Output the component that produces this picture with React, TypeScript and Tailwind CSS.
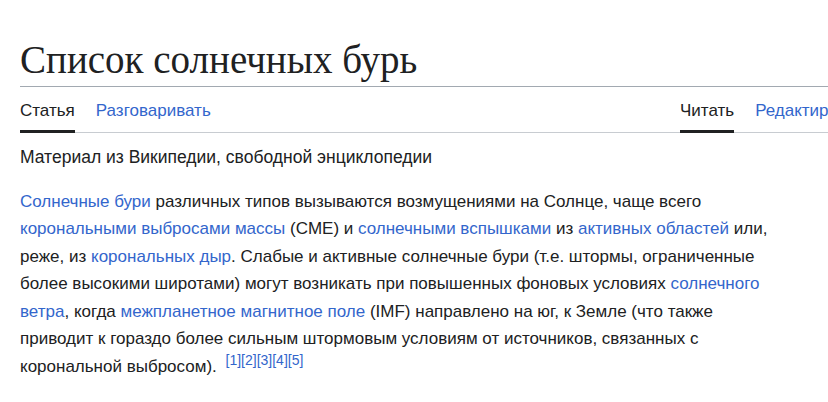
export default function App() {
  const link = 'text-[#3366cc]';
  return (
    <div className="min-h-screen bg-white text-[#202122] font-['Liberation_Sans',Arial,sans-serif] overflow-hidden">
      <div className="pl-5 pt-[37px]">
        <h1 className="font-['Liberation_Serif','Times_New_Roman',serif] text-[39px] leading-[1.2] pb-[2px] border-b border-[#a2a9b1] whitespace-nowrap">
          Список солнечных бурь
        </h1>
        <div className="flex whitespace-nowrap border-b border-[#c8ccd1] text-[17px] leading-5">
          <div className="flex gap-[21px] w-[660px] flex-none">
            <span className="pt-[14px] pb-[9px] border-b-[3px] border-[#202122] -mb-px">Статья</span>
            <span className={`pt-[14px] pb-[9px] ${link}`}>Разговаривать</span>
          </div>
          <div className="flex gap-[21px] flex-none">
            <span className="pt-[14px] pb-[9px] border-b-[3px] border-[#202122] -mb-px">Читать</span>
            <span className={`pt-[14px] pb-[9px] ${link}`}>Редактировать</span>
          </div>
        </div>
      </div>
      <div className="px-5 w-[808px]">
        <p className="text-[17.5px] leading-[26px] mt-[11px]">Материал из Википедии, свободной энциклопедии</p>
        <p className="text-[17px] leading-[27.5px] mt-[18px]">
          <a className={link}>Солнечные бури</a> различных типов вызываются возмущениями на Солнце, чаще всего{' '}
          <a className={link}>корональными выбросами массы</a> (CME) и <a className={link}>солнечными вспышками</a> из{' '}
          <a className={link}>активных областей</a> или, реже, из <a className={link}>корональных дыр</a>. Слабые и активные
          солнечные бури (т.е. штормы, ограниченные более высокими широтами) могут возникать при повышенных фоновых условиях{' '}
          <a className={link}>солнечного ветра</a>, когда <a className={link}>межпланетное магнитное поле</a> (IMF)
          направлено на юг, к Земле (что также приводит к гораздо более сильным штормовым условиям от источников,
          связанных с корональной выбросом).{' '}
          <sup className={`${link} text-[14px] ml-[4px]`}>[1][2][3][4][5]</sup>
        </p>
      </div>
    </div>
  );
}
